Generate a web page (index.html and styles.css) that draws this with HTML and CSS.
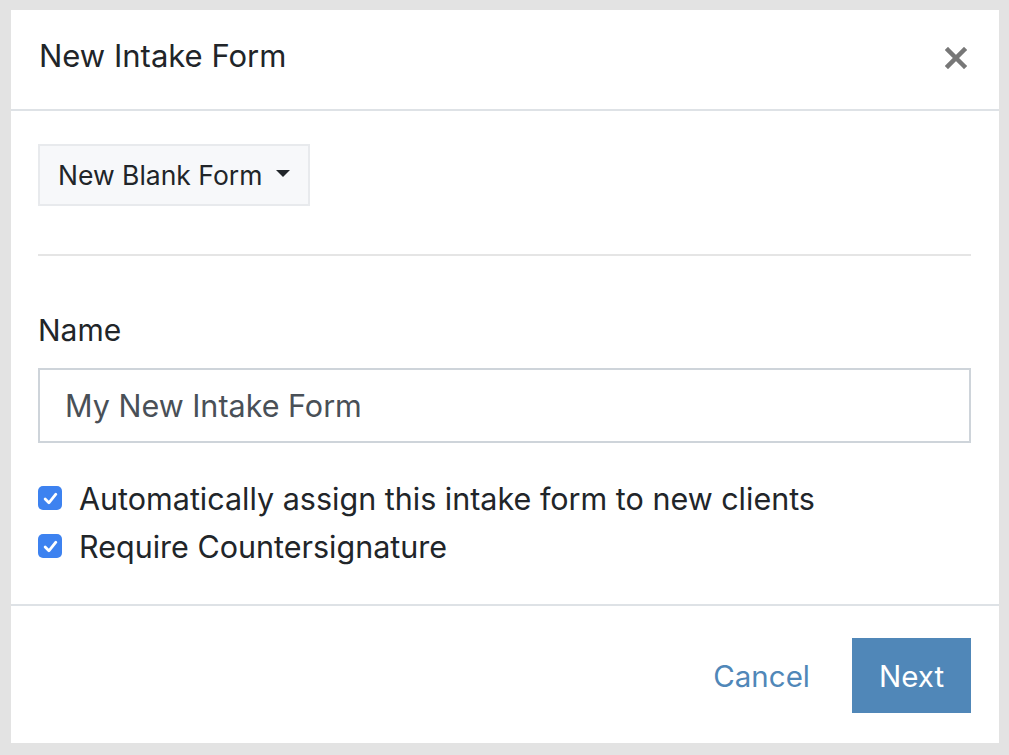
FILE: index.html
```html
<!DOCTYPE html>
<html lang="en">
  <head>
    <meta charset="UTF-8" />
    <meta name="viewport" content="width=device-width, initial-scale=1.0" />
    <title>New Intake Form</title>
    <link rel="stylesheet" href="styles.css">
  </head>
  <body>
    <div class="modal">
      <div class="modal-header">
        <h2>New Intake Form</h2>
        <button class="close" aria-label="Close">
          <svg width="22" height="22" viewBox="0 0 22 22"><path d="M3 3L19 19M19 3L3 19" stroke="#777" stroke-width="4.5" stroke-linecap="square"/></svg>
        </button>
      </div>

      <div class="modal-body">
        <button class="dropdown">New Blank Form <span class="caret"></span></button>
        <hr />
        <label class="field-label" for="name">Name</label>
        <input type="text" id="name" value="My New Intake Form" />

        <ul class="checks">
          <li>
            <span class="check"><svg width="15" height="13" viewBox="0 0 14 12"><path d="M2 6.5L5.5 10L12 2" fill="none" stroke="#fff" stroke-width="2.6" stroke-linecap="round" stroke-linejoin="round"/></svg></span>
            Automatically assign this intake form to new clients
          </li>
          <li>
            <span class="check"><svg width="15" height="13" viewBox="0 0 14 12"><path d="M2 6.5L5.5 10L12 2" fill="none" stroke="#fff" stroke-width="2.6" stroke-linecap="round" stroke-linejoin="round"/></svg></span>
            Require Countersignature
          </li>
        </ul>
      </div>

      <div class="modal-footer">
        <a href="#" class="cancel">Cancel</a>
        <button class="btn">Next</button>
      </div>
    </div>
  </body>
</html>
```

FILE: styles.css
```css
* {
  box-sizing: border-box;
}

:root {
  --text-color: #212529;
  --line-color: #dee2e6;
  --main-color: #5087b8;
}

body {
  margin: 0;
  padding: 10px 10px 12px 11px;
  background: #e3e3e3;
  font-family: Inter, "Open Sans", sans-serif;
  color: var(--text-color);
  height: 100vh;
}

.modal {
  background: #fff;
  height: 100%;
  display: flex;
  flex-direction: column;
}

.modal-header {
  height: 101px;
  display: flex;
  align-items: center;
  justify-content: space-between;
  padding: 0 32px 8px 28px;
  border-bottom: 2px solid var(--line-color);
}

.modal-header h2 {
  margin: 0;
  font-size: 31px;
  font-weight: 400;
}

.close {
  border: none;
  background: none;
  padding: 0;
  display: flex;
  margin-top: 4px;
}

.modal-body {
  padding: 33px 28px 22px 27px;
}

.dropdown {
  font-family: inherit;
  font-size: 26.5px;
  color: var(--text-color);
  background: #f7f8fa;
  border: 2px solid #e8eaed;
  height: 62px;
  padding: 0 18px;
  display: flex;
  align-items: center;
  gap: 14px;
}

.caret {
  width: 0;
  height: 0;
  border-left: 7px solid transparent;
  border-right: 7px solid transparent;
  border-top: 7px solid var(--text-color);
  margin-bottom: 4px;
}

hr {
  border: none;
  border-top: 2px solid #e5e5e5;
  margin: 48px 0 0;
}

.field-label {
  display: block;
  font-size: 30px;
  line-height: 36px;
  margin: 56px 0 20px;
}

input {
  display: block;
  width: 100%;
  height: 75px;
  font-family: inherit;
  font-size: 30.5px;
  color: #495057;
  border: 2px solid #ced4da;
  padding: 0 25px;
  outline: none;
}

.checks {
  list-style: none;
  padding: 0;
  margin: 31px 0 0;
}

.checks li {
  display: flex;
  align-items: center;
  gap: 17px;
  font-size: 30.5px;
  height: 48px;
}

.check {
  width: 24px;
  height: 24px;
  border-radius: 5px;
  background: #3d82f0;
  display: flex;
  align-items: center;
  justify-content: center;
  flex-shrink: 0;
}

.modal-footer {
  margin-top: auto;
  border-top: 2px solid var(--line-color);
  display: flex;
  justify-content: flex-end;
  align-items: center;
  gap: 42px;
  padding: 32px 28px 30px;
}

.cancel {
  font-size: 29.5px;
  color: var(--main-color);
  text-decoration: none;
}

.btn {
  font-family: inherit;
  font-size: 29.5px;
  color: #fff;
  background: var(--main-color);
  border: none;
  width: 119px;
  height: 75px;
}
```
